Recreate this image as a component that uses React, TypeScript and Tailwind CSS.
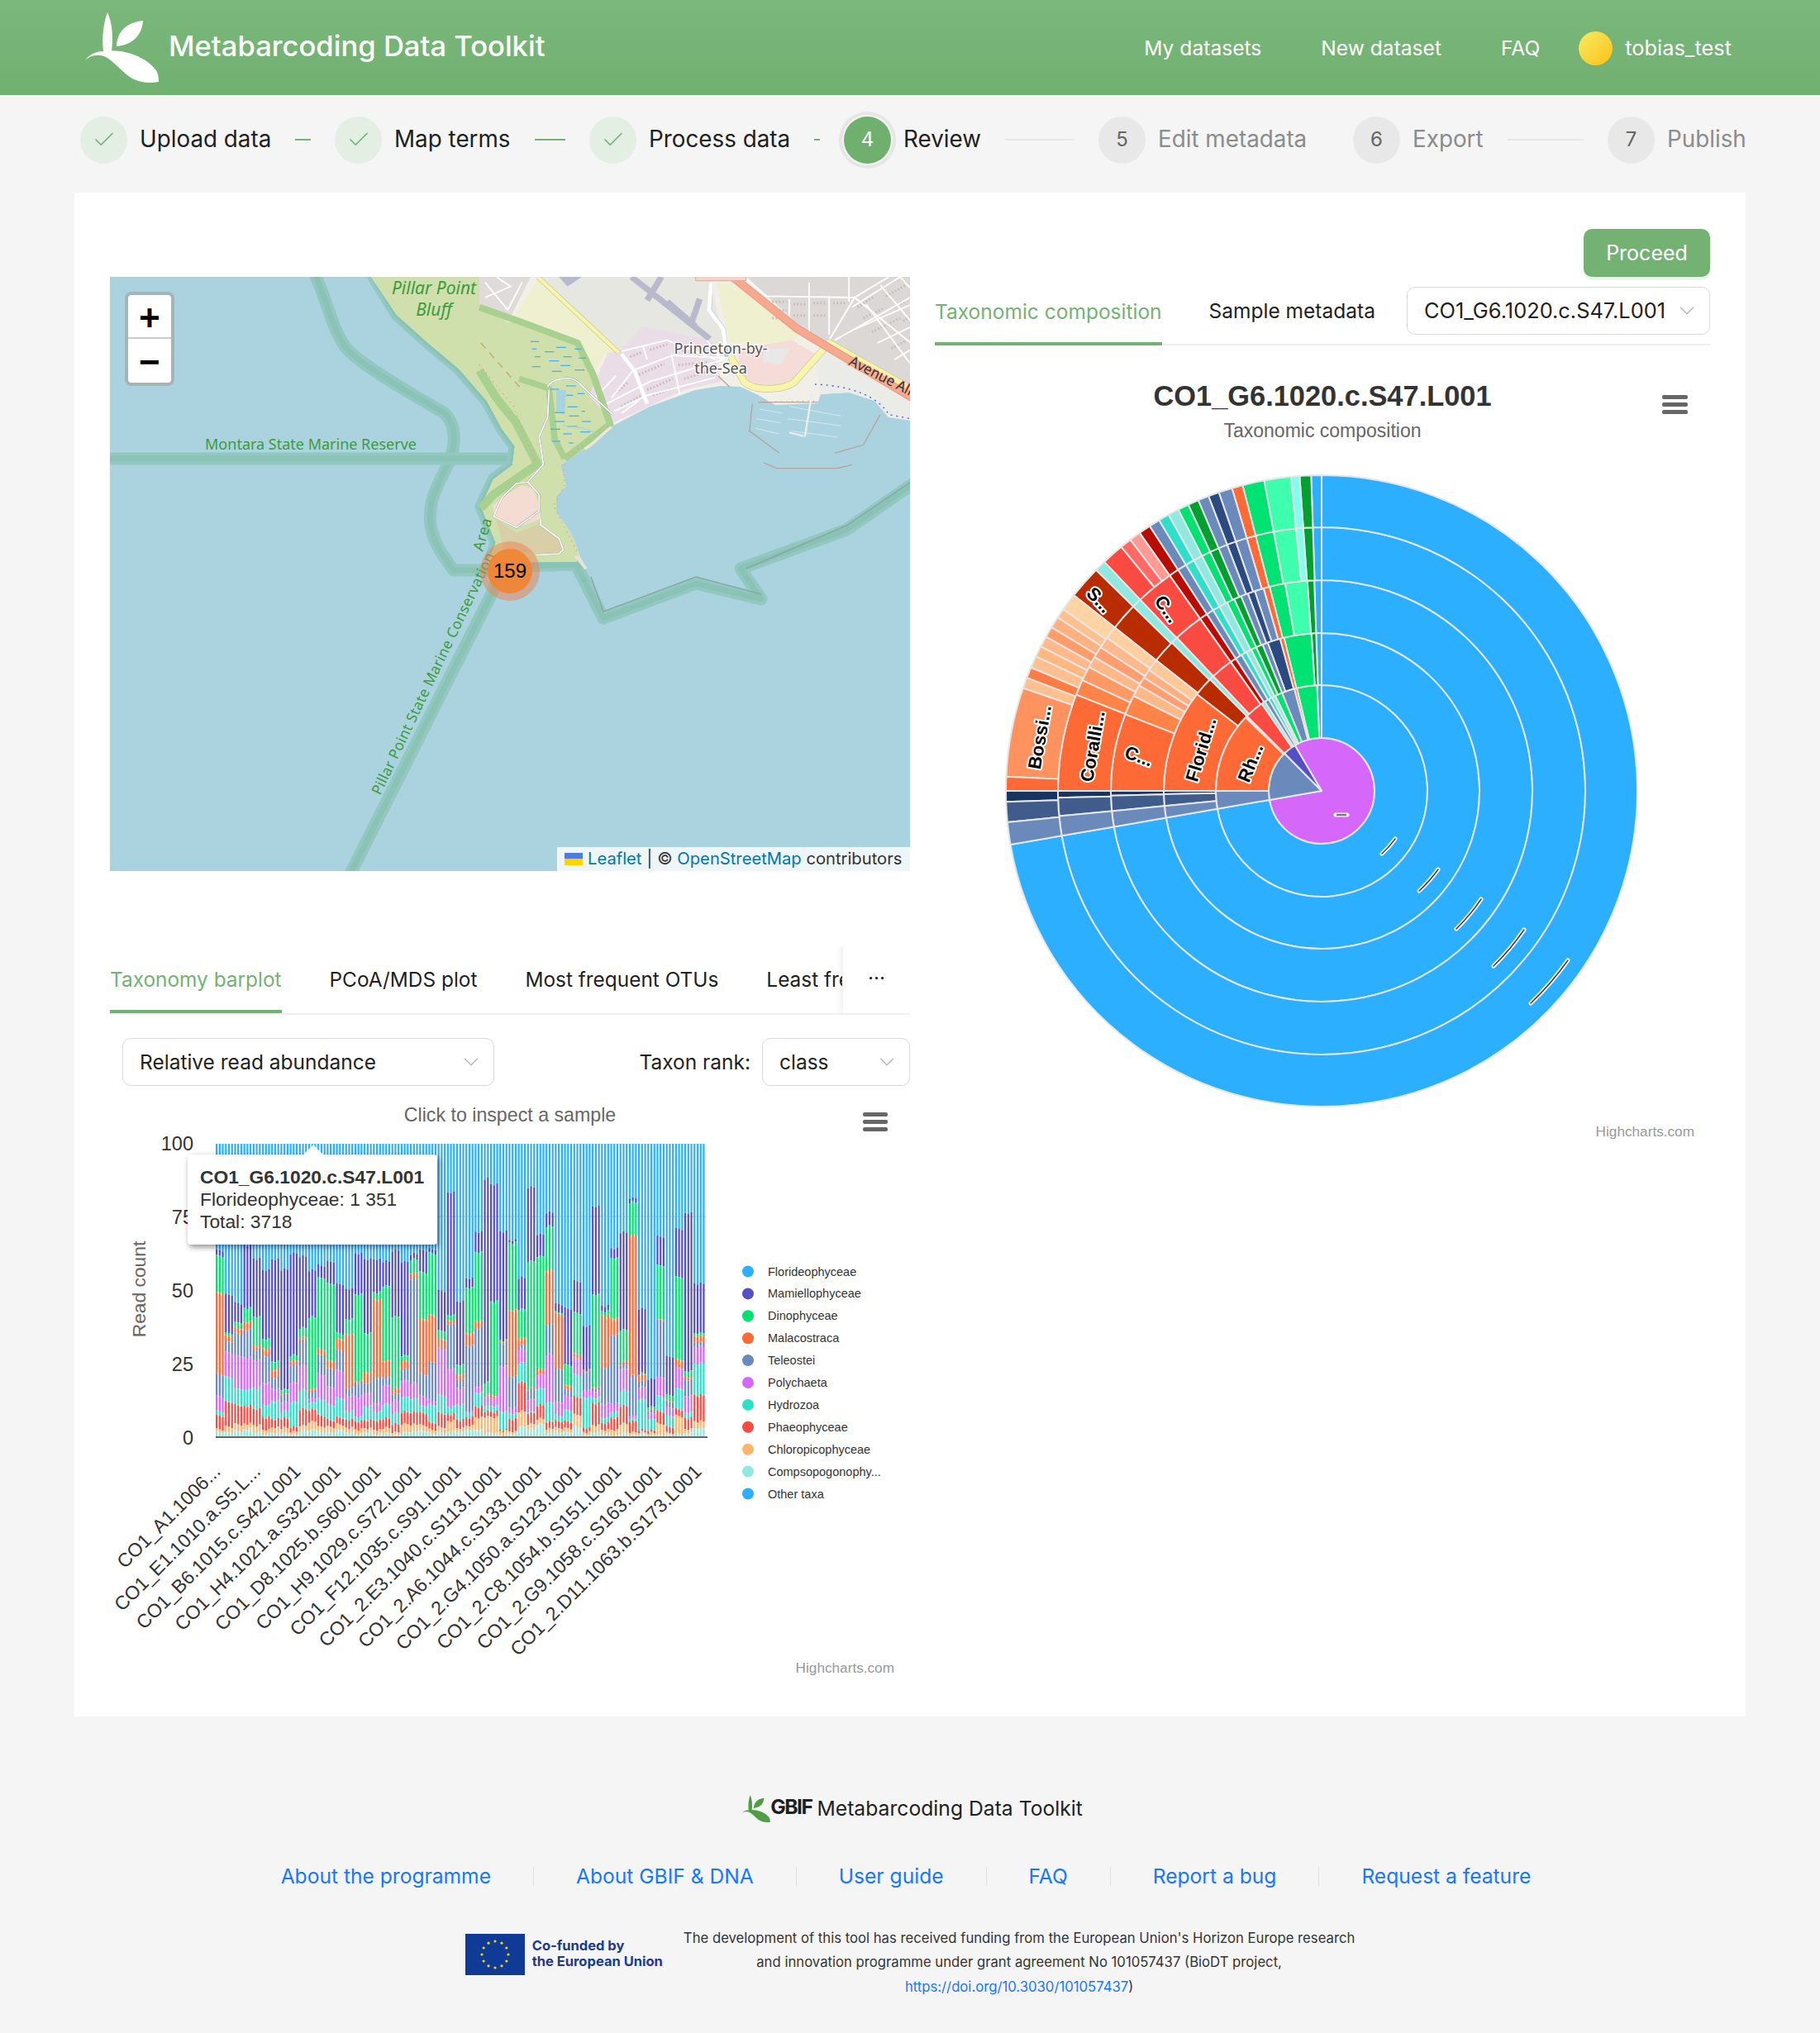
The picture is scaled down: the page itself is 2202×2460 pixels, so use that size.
import { Check, ChevronDown } from "lucide-react"

const GREEN = "#74b274"

const steps = [
  { label: "Upload data", state: "done" },
  { label: "Map terms", state: "done" },
  { label: "Process data", state: "done" },
  { label: "Review", state: "current" },
  { label: "Edit metadata", state: "wait" },
  { label: "Export", state: "wait" },
  { label: "Publish", state: "wait" },
]

const c = {
  blue: "#2caffe",
  indigo: "#544fc5",
  green: "#00e272",
  orange: "#fe6a35",
  gray: "#6b8abc",
  purple: "#d568fb",
  teal: "#2ee0ca",
  red: "#fa4b42",
  lo: "#feb56a",
  pale: "#91e8e1",
  dg: "#00a030",
  mint: "#3dffae",
  cyan: "#80ffef",
  navy: "#2a4a80",
  dred: "#b80c00",
  brown: "#b92c00",
  dnavy: "#17355f",
  mnavy: "#3f5c8c",
}

// [end angle, colour], angles counter-clockwise from the top
const upper3 = [[2, c.blue], [3.9, c.dg], [10, c.mint], [14.3, c.green], [16, c.orange], [18.5, c.gray], [20.5, c.navy], [22.5, c.gray], [24.5, c.dg], [26.7, c.green], [29, c.pale], [31, c.teal], [33, c.gray], [35.2, c.dred]] as const
const upper4 = [[1.9, c.blue], [4, c.dg], [5.6, c.cyan], [10.5, c.mint], [14.5, c.green], [16.5, c.orange], [19, c.gray], [21, c.navy], [23, c.gray], [25, c.dg], [27, c.green], [29, c.pale], [31, c.teal], [33, c.gray], [35.2, c.dred]] as const

const rings: { r0: number; r1: number; segs: readonly (readonly [number, string])[] }[] = [
  {
    r0: 64,
    r1: 128,
    segs: [[2.5, c.blue], [13.6, c.green], [15, c.orange], [22, c.gray], [26, c.green], [28, c.pale], [30, c.teal], [32.5, c.gray], [34.5, c.pale], [45, c.red], [46, c.pale], [90, c.orange], [99.8, c.gray]],
  },
  {
    r0: 128,
    r1: 191,
    segs: [[2, c.blue], [3.7, c.dg], [13.8, c.green], [15.3, c.orange], [20, c.navy], [22, c.gray], [24.5, c.dg], [26.5, c.green], [28.5, c.pale], [30.5, c.teal], [33, c.gray], [35.2, c.dred], [43.4, c.red], [45, c.pale], [52.2, c.brown], [90, c.orange], [91.2, c.dnavy], [95.5, c.mnavy], [99.8, c.gray]],
  },
  {
    r0: 191,
    r1: 255,
    segs: [...upper3, [43.4, c.red], [45.3, c.pale], [51.7, c.brown], [55, "#ffc898"], [57.5, "#ffb080"], [60, "#ff9e6e"], [63.2, "#ffb888"], [68.7, "#ff8448"], [90, c.orange], [91.3, c.dnavy], [95.5, c.mnavy], [99.8, c.gray]],
  },
  {
    r0: 255,
    r1: 319,
    segs: [...upper4, [43.5, c.red], [45.6, c.pale], [51.7, c.brown], [54.5, "#ffcf9f"], [57, "#ffb98a"], [59.5, "#ff9e6e"], [62, "#ffb888"], [65.2, "#ff9a66"], [68.6, "#ff8448"], [90, c.orange], [91.5, c.dnavy], [95.5, c.mnavy], [99.8, c.gray]],
  },
  {
    r0: 319,
    r1: 382,
    segs: [...upper4, [37.3, "#ff9a94"], [39.4, "#ff6a64"], [43.5, c.red], [45.6, c.pale], [51.7, c.brown], [54.9, "#ffd4a3"], [56.7, "#ffc090"], [58.8, "#ffb27f"], [60.8, "#ff9c6a"], [62.8, "#ffb98a"], [64.8, "#ffb880"], [67, "#ffc090"], [69, "#ff7c45"], [71, "#ffc090"], [87.4, "#ff9360"], [90, c.orange], [92, c.dnavy], [95.7, c.mnavy], [99.8, c.gray]],
  },
]

const CX = 391
const CY = 392

function pt(r: number, a: number) {
  const t = (a * Math.PI) / 180
  return `${(CX - r * Math.sin(t)).toFixed(2)} ${(CY - r * Math.cos(t)).toFixed(2)}`
}

function arc(r0: number, r1: number, a0: number, a1: number) {
  const large = a1 - a0 > 180 ? 1 : 0
  if (r0 === 0) return `M${CX} ${CY}L${pt(r1, a0)}A${r1} ${r1} 0 ${large} 0 ${pt(r1, a1)}Z`
  return `M${pt(r0, a0)}L${pt(r1, a0)}A${r1} ${r1} 0 ${large} 0 ${pt(r1, a1)}L${pt(r0, a1)}A${r0} ${r0} 0 ${large} 1 ${pt(r0, a0)}Z`
}

// small clipped data labels, full coordinates minus the svg origin
const marks = [
  [1672, 1033, 1688, 1015],
  [1717, 1078, 1740, 1052],
  [1762, 1124, 1792, 1088],
  [1807, 1169, 1844, 1125],
  [1852, 1214, 1897, 1162],
]

const sunLabels = [
  { t: "Bossi...", x: 1258, y: 892, r: -80 },
  { t: "Coralli...", x: 1322, y: 903, r: -80 },
  { t: "C...", x: 1378, y: 915, r: 20 },
  { t: "Florid...", x: 1453, y: 907, r: -73 },
  { t: "Rh...", x: 1513, y: 923, r: -68 },
  { t: "S...", x: 1330, y: 726, r: 47 },
  { t: "C...", x: 1412, y: 737, r: 55 },
]

function Sunburst() {
  const ox = 1208
  const oy = 565
  return (
    <svg width="784" height="784" className="mx-auto block font-['Liberation_Sans',sans-serif]">
      <g stroke="#e6e6e6" strokeWidth="2" strokeLinejoin="round">
        <path d={arc(0, 64, 99.8, 390.4)} fill={c.purple} />
        <path d={arc(0, 64, 44.6, 99.8)} fill={c.gray} />
        <path d={arc(0, 64, 30.4, 44.6)} fill={c.indigo} />
        {rings.map((ring) => {
          let prev = 0
          return (
            <g key={ring.r0}>
              <path d={arc(ring.r0, ring.r1, 99.8, 360)} fill={c.blue} />
              {ring.segs.map(([end, color]) => {
                const d = arc(ring.r0, ring.r1, prev, end)
                prev = end
                return <path key={end} d={d} fill={color} />
              })}
            </g>
          )
        })}
      </g>
      {sunLabels.map((l) => (
        <text
          key={l.t + l.x}
          x={l.x - ox}
          y={l.y - oy}
          transform={`rotate(${l.r} ${l.x - ox} ${l.y - oy})`}
          textAnchor="middle"
          dominantBaseline="central"
          fontSize="22"
          fontWeight="700"
          fill="#000"
          stroke="#fff"
          strokeWidth="4"
          strokeLinejoin="round"
          paintOrder="stroke"
        >
          {l.t}
        </text>
      ))}
      <line x1={1623 - 7 - ox} x2={1623 + 7 - ox} y1={986 - oy} y2={986 - oy} stroke="#fff" strokeWidth="5" strokeLinecap="round" />
      <line x1={1623 - 6 - ox} x2={1623 + 6 - ox} y1={986 - oy} y2={986 - oy} stroke="#777" strokeWidth="2.5" />
      {marks.map(([x1, y1, x2, y2]) => {
        const r = Math.hypot(x1 - 1599, y1 - 957)
        const d = `M${x1 - ox} ${y1 - oy}A${r} ${r} 0 0 0 ${x2 - ox} ${y2 - oy}`
        return (
          <g key={x1} fill="none" strokeLinecap="round">
            <path d={d} stroke="#fff" strokeWidth="5" />
            <path d={d} stroke="#333" strokeWidth="1.4" />
          </g>
        )
      })}
    </svg>
  )
}

// [bars, indigo, green, orange, gray, purple, teal, red, light orange, pale] tops, traced off the plot
const blocks = [
  [3, 400, 420, 555, 850, 930, 985, 1000, 1050, 1060],
  [3, 560, 700, 710, 730, 770, 860, 950, 1040, 1060],
  [3, 590, 660, 680, 700, 780, 900, 960, 1030, 1055],
  [3, 380, 610, 660, 690, 790, 905, 965, 1030, 1050],
  [3, 430, 640, 745, 760, 800, 900, 975, 1035, 1060],
  [3, 470, 720, 755, 780, 880, 960, 1005, 1050, 1065],
  [3, 430, 800, 830, 860, 900, 945, 1010, 1040, 1060],
  [3, 470, 905, 920, 925, 950, 985, 1010, 1045, 1065],
  [3, 410, 780, 800, 815, 880, 950, 1040, 1058, 1068],
  [3, 420, 680, 715, 725, 815, 905, 975, 1035, 1055],
  [3, 470, 640, 900, 910, 935, 950, 975, 1020, 1050],
  [3, 455, 500, 760, 780, 850, 940, 1000, 1040, 1060],
  [3, 440, 520, 800, 830, 895, 960, 1015, 1040, 1060],
  [3, 520, 700, 720, 760, 835, 935, 1005, 1030, 1050],
  [3, 540, 650, 705, 900, 925, 985, 1015, 1045, 1062],
  [3, 410, 560, 875, 880, 930, 1005, 1020, 1050, 1068],
  [3, 430, 700, 840, 880, 915, 965, 1015, 1045, 1060],
  [3, 430, 550, 575, 860, 950, 985, 1015, 1050, 1065],
  [3, 440, 530, 800, 860, 890, 960, 1010, 1045, 1065],
  [3, 400, 640, 900, 920, 945, 990, 1030, 1060, 1070],
  [3, 440, 780, 800, 830, 870, 930, 985, 1030, 1060],
  [3, 410, 430, 480, 500, 880, 935, 985, 1030, 1055],
  [3, 400, 480, 650, 850, 930, 965, 990, 1035, 1055],
  [3, 395, 410, 635, 805, 945, 960, 1025, 1050, 1065],
  [3, 545, 690, 720, 755, 755, 925, 990, 1040, 1060],
  [3, 190, 635, 655, 670, 830, 970, 995, 1020, 1060],
  [3, 585, 815, 850, 870, 900, 960, 1015, 1045, 1060],
  [3, 500, 535, 700, 745, 985, 990, 1005, 1035, 1050],
  [3, 330, 405, 655, 680, 890, 915, 965, 1005, 1050],
  [2, 140, 880, 925, 930, 930, 965, 985, 1005, 1065],
  [3, 160, 585, 925, 935, 935, 965, 985, 1005, 1065],
  [3, 330, 725, 730, 735, 820, 985, 1050, 1055, 1070],
  [3, 360, 370, 615, 855, 970, 990, 1010, 1055, 1065],
  [3, 500, 615, 720, 745, 760, 810, 880, 985, 1040],
  [3, 170, 440, 900, 905, 940, 985, 990, 1030, 1050],
  [3, 340, 420, 830, 850, 850, 900, 960, 1010, 1030],
  [3, 260, 310, 470, 665, 775, 950, 1020, 1045, 1060],
  [3, 595, 625, 630, 830, 950, 1000, 1020, 1045, 1060],
  [3, 610, 815, 890, 905, 930, 980, 1020, 1045, 1060],
  [3, 510, 625, 775, 790, 790, 850, 930, 995, 1040],
  [3, 675, 835, 835, 840, 910, 935, 1045, 1060, 1070],
  [3, 240, 560, 895, 900, 910, 935, 955, 1035, 1060],
  [3, 600, 620, 635, 825, 955, 1005, 1025, 1050, 1065],
  [3, 390, 425, 645, 705, 955, 985, 1005, 1050, 1070],
  [3, 335, 690, 805, 815, 830, 910, 965, 1030, 1065],
  [3, 210, 225, 345, 855, 1000, 1010, 1020, 1060, 1070],
  [3, 610, 845, 850, 875, 895, 940, 1050, 1058, 1065],
  [3, 865, 965, 975, 980, 990, 1010, 1050, 1060, 1070],
  [3, 350, 455, 650, 655, 860, 930, 985, 1030, 1070],
  [3, 785, 925, 945, 950, 970, 1000, 1040, 1062, 1070],
  [3, 320, 495, 795, 825, 825, 900, 975, 1000, 1065],
  [3, 265, 840, 860, 870, 930, 990, 1010, 1050, 1065],
  [4, 520, 700, 710, 735, 750, 810, 925, 1020, 1045],
]

const stack = [c.blue, c.indigo, c.green, c.orange, c.gray, c.purple, c.teal, c.red, c.lo, c.pale]

const legend = [
  ["Florideophyceae", c.blue],
  ["Mamiellophyceae", c.indigo],
  ["Dinophyceae", c.green],
  ["Malacostraca", c.orange],
  ["Teleostei", c.gray],
  ["Polychaeta", c.purple],
  ["Hydrozoa", c.teal],
  ["Phaeophyceae", c.red],
  ["Chloropicophyceae", c.lo],
  ["Compsopogonophy...", c.pale],
  ["Other taxa", c.blue],
]

const xLabels = [
  "CO1_A1.1006...",
  "CO1_E1.1010.a.S5.L...",
  "CO1_B6.1015.c.S42.L001",
  "CO1_H4.1021.a.S32.L001",
  "CO1_D8.1025.b.S60.L001",
  "CO1_H9.1029.c.S72.L001",
  "CO1_F12.1035.c.S91.L001",
  "CO1_2.E3.1040.c.S113.L001",
  "CO1_2.A6.1044.c.S133.L001",
  "CO1_2.G4.1050.a.S123.L001",
  "CO1_2.C8.1054.b.S151.L001",
  "CO1_2.G9.1058.c.S163.L001",
  "CO1_2.D11.1063.b.S173.L001",
]

function BarChart() {
  const bars: { x: number; y: number; h: number; color: string }[] = []
  let i = 0
  blocks.forEach((b) => {
    for (let n = 0; n < b[0]; n++) {
      const jitter = ((i * 37) % 11) - 5
      const tops = [12, ...b.slice(1).map((v) => Math.min(1075, v + jitter)), 1075]
      tops.slice(0, -1).forEach((t, k) => {
        const next = tops[k + 1]
        if (next > t) bars.push({ x: 128 + i * 3.73, y: 50 + t / 3, h: (next - t) / 3, color: stack[k] })
      })
      i++
    }
  })
  return (
    <div className="relative h-[703px] w-[968px] font-['Liberation_Sans',sans-serif]">
      <svg width="968" height="703" className="block">
        <text x="484" y="27" textAnchor="middle" fontSize="23.2" fill="#666">
          Click to inspect a sample
        </text>
        <g fill="#666">
          <rect x="911" y="16" width="30" height="5" rx="2" />
          <rect x="911" y="25" width="30" height="5" rx="2" />
          <rect x="911" y="34" width="30" height="5" rx="2" />
        </g>
        {[142, 231, 320].map((y) => (
          <line key={y} x1="128" x2="721" y1={y} y2={y} stroke="#e6e6e6" strokeWidth="2" />
        ))}
        {bars.map((b, k) => (
          <rect key={k} x={b.x} y={b.y} width="2.2" height={b.h} fill={b.color} />
        ))}
        <line x1="128" x2="723" y1="409" y2="409" stroke="#666" strokeWidth="2" />
        <g fontSize="23.5" fill="#333" textAnchor="end">
          {[["100", 53], ["75", 142], ["50", 231], ["25", 320], ["0", 409]].map(([t, y]) => (
            <text key={t} x="101" y={Number(y) + 9}>
              {t}
            </text>
          ))}
        </g>
        <text transform="translate(43 230) rotate(-90)" textAnchor="middle" fontSize="22.8" fill="#666">
          Read count
        </text>
        <g fontSize="23.1" fill="#333" textAnchor="end">
          {xLabels.map((t, k) => (
            <text key={t} transform={`translate(${135 + k * 48.5} 452) rotate(-45)`}>
              {t}
            </text>
          ))}
        </g>
        {legend.map(([t, color], k) => (
          <g key={t}>
            <circle cx="772" cy={208.5 + k * 26.9} r="7" fill={color} />
            <text x="796" y={213.5 + k * 26.9} fontSize="14.5" fill="#333">
              {t}
            </text>
          </g>
        ))}
        <text x="949" y="694" textAnchor="end" fontSize="17.2" fill="#999">
          Highcharts.com
        </text>
      </svg>
      <div className="absolute left-[94px] top-[67px] h-[109px] w-[302px] rounded-[4px] bg-white pl-[15px] pt-[14px] text-[22.8px] leading-[27px] text-[#333] shadow-[2px_3px_7px_rgba(0,0,0,0.45)]">
        <div className="absolute left-[143px] top-[-8px] size-[18px] rotate-45 bg-white" />
        <div className="relative font-bold">CO1_G6.1020.c.S47.L001</div>
        <div>Florideophyceae: 1 351</div>
        <div>Total: 3718</div>
      </div>
    </div>
  )
}

const pts = (a: number[][]) => a.map((p) => p.join(",")).join(" ")

const seaBands = [
  "M247 -5C262 25 268 62 285 85C300 105 370 145 405 165C420 180 418 205 410 225C395 255 385 270 388 300C392 325 405 340 416 355L470 355",
  "M0 220L490 220",
  "M291 722L463 381L470 360",
  "M500 350L564 348L597 413L709 371L788 390L763 353L891 306L972 250",
  "M316 -5L347 46L385 80L422 111L456 150L475 185L490 205L487 228L464 245L449 278L467 322L460 345",
]

const landOutline = [[316, 0], [347, 46], [385, 80], [422, 111], [456, 150], [475, 185], [490, 205], [487, 228], [464, 245], [449, 278], [467, 322], [457, 345], [564, 345], [569, 338], [558, 310], [540, 285], [540, 265], [552, 253], [545, 228], [574, 208], [609, 180], [653, 157], [708, 137], [739, 132], [763, 133], [784, 143], [805, 155], [856, 153], [860, 142], [894, 140], [925, 150], [942, 170], [977, 175], [977, 0]]

const parkOutline = [[316, 0], [347, 46], [385, 80], [422, 111], [456, 150], [475, 185], [490, 205], [487, 228], [464, 245], [449, 278], [467, 322], [457, 345], [564, 345], [569, 338], [558, 310], [540, 285], [540, 265], [552, 253], [545, 228], [574, 208], [607, 178], [586, 118], [566, 78], [499, 52], [481, 55], [447, 33], [450, 0]]

const marsh = [[180, 235, 210], [185, 262, 200], [230, 272, 262], [270, 256, 305], [335, 262, 360], [195, 290, 215], [295, 290, 325], [350, 295, 375], [245, 305, 280], [285, 322, 320], [185, 326, 215], [335, 338, 370], [255, 343, 290], [250, 408, 280], [305, 396, 340], [345, 424, 370], [305, 430, 330], [310, 472, 345], [265, 493, 300], [360, 488, 372], [315, 505, 350], [265, 525, 300], [360, 525, 392], [310, 543, 345], [250, 553, 285], [295, 570, 325], [255, 597, 285], [315, 603, 332], [355, 563, 390]]

const townStreets = [
  "M500 270L660 230L830 300", "M465 440L540 340L680 285L880 295", "M410 435L480 360", "M430 470L600 380L860 300", "M470 490L590 430L830 365", "M575 250L590 300", "M675 280L705 425", "M800 230L850 300", "M500 495L560 450",
]

const gridStreets = [
  "M940 10L1010 70L1320 75L1541 260", "M1160 20L1160 200", "M1090 80L1090 170", "M1230 70L1230 210", "M1300 0L1300 90", "M1230 230L1320 75L1440 0", "M1250 230L1541 60", "M1320 190L1541 90", "M1400 240L1541 170", "M1460 300L1541 250", "M1360 100L1541 350", "M1410 30L1541 190", "M1480 0L1541 70", "M1310 110L1480 0",
]

const buildings = [
  "M1030 90L1080 92M1030 120L1080 122M1030 150L1080 150M1105 100L1150 100M1105 140L1150 140M1175 95L1220 95M1175 140L1220 140M1245 95L1290 95",
  "M1330 110L1390 70M1350 150L1420 115M1380 200L1480 150M1430 70L1500 30M1460 110L1530 70M1490 160L1535 135M1450 260L1530 215",
  "M530 290L570 275M600 265L660 245M690 260L780 285M550 360L650 315M700 320L800 310M590 410L680 370M720 370L800 345M480 420L520 385M500 470L570 430M610 430L690 400",
]

function MapArt() {
  return (
    <svg viewBox="0 0 968 719" width="968" height="719" className="block font-['Noto_Sans',sans-serif]">
      <rect width="968" height="719" fill="#aad3df" />
      {seaBands.map((d) => (
        <g key={d} fill="none" strokeLinejoin="round">
          <path d={d} stroke="#92c8c0" strokeWidth="15" />
          <path d={d} stroke="#8ac3b6" strokeWidth="7" />
        </g>
      ))}
      <polyline points="582,363 597,405 709,363 788,384" fill="none" stroke="#8aa8a4" strokeWidth="1.5" />
      <polyline points="770,353 891,301 972,246" fill="none" stroke="#8aa8a4" strokeWidth="1.5" />
      <polygon points={pts(landOutline)} fill="#f2efe9" />
      <polygon points={pts(parkOutline)} fill="#cfe0ad" />
      <g transform="translate(447 0) scale(0.344 0.3333)">
        {/* fields, airfield and town blocks */}
        <polygon points="125,140 210,0 490,280 440,285 400,350 345,235 150,155" fill="#eef0d0" />
        <polygon points="200,0 810,0 860,240 500,270" fill="#e7e7e1" />
        <polygon points="835,20 880,240 1100,240 1130,200 960,40" fill="#eef0d0" />
        <polygon points="575,180 820,230 850,380 720,410 470,530 385,430 450,280 500,260" fill="#eadde8" />
        <polygon points="905,260 1100,230 1180,280 1130,370 1000,410 920,370" fill="#f5dcd8" />
        <polygon points="1000,260 1090,260 1060,320 1000,310" fill="#e8e8e6" />
        <polygon points="940,0 1541,0 1541,420 1150,200" fill="#dcd8d5" />
        <polygon points="1180,300 1240,260 1541,440 1541,520 1430,500 1390,440 1300,420 1200,425" fill="#ebebe7" />
        <polygon points="0,0 180,0 100,165 0,100" fill="#dedbd8" />
        <polygon points="280,0 360,0 310,35" fill="#b9b9ce" />
        <g fill="none" stroke="#b9b9ce" strokeWidth="22">
          <path d="M535 0L810 225" />
          <path d="M640 0L590 85" />
          <path d="M660 90L760 180" />
          <path d="M775 80L745 170" />
        </g>
        {buildings.map((d) => (
          <path key={d} d={d} fill="none" stroke="#c9bcb6" strokeWidth="9" strokeDasharray="5 7" />
        ))}
        <g fill="none" stroke="#fff" strokeWidth="5.5">
          {gridStreets.map((d) => (
            <path key={d} d={d} />
          ))}
          {townStreets.map((d) => (
            <path key={d} d={d} />
          ))}
          <path d="M20 20L100 120L150 20M20 75L110 35L60 0" />
        </g>
        <path d="M500 280L545 340L590 460" fill="none" stroke="#fff" strokeWidth="13" />
        <path d="M815 20L810 120L860 190L870 290" fill="none" stroke="#9fd0dc" strokeWidth="14" />
        <path d="M815 20L808 120L858 190L866 250" fill="none" stroke="#fff" strokeWidth="14" />
        <g fill="none" strokeLinejoin="round">
          <path d="M205 0L490 275" stroke="#c9c98f" strokeWidth="17" />
          <path d="M205 0L490 275" stroke="#f7f4ab" strokeWidth="13" />
          <path d="M885 290L930 380C970 420 1080 410 1110 380L1230 240L1540 420" stroke="#c9c98f" strokeWidth="26" />
          <path d="M885 290L930 380C970 420 1080 410 1110 380L1230 240L1540 420" stroke="#f7f4ab" strokeWidth="22" />
          <path d="M890 0L1120 190L1541 450" stroke="#e5957c" strokeWidth="30" />
          <path d="M890 0L1120 190L1541 450" stroke="#f6a98e" strokeWidth="25" />
        </g>
        <rect x="760" y="-10" width="178" height="24" rx="6" fill="#f6d3c4" stroke="#e5a890" strokeWidth="3" />
        <path d="M1180 390C1300 395 1400 430 1440 500L1541 520" fill="none" stroke="#4060ee" strokeWidth="4" strokeDasharray="6 14" />
        <path d="M980 455L1190 455M880 400L840 360M960 460L950 560L1055 640M1250 640L1350 610L1410 500M1000 675L1045 695L1260 695L1310 682" fill="none" stroke="#b5a5a0" strokeWidth="4" />
        <g fill="none" stroke="#d5e7ee" strokeWidth="3">
          <path d="M985 480L1065 495M975 515L1060 530M970 550L1055 570M1090 470L1270 505M1085 515L1270 540M1100 560L1260 582" />
        </g>
        <path d="M1170 420L1145 580M1090 565L1140 578" fill="none" stroke="#ececec" strokeWidth="7" />
        {/* park edges, marsh and trails */}
        <g fill="none" stroke="#a8d190" strokeLinejoin="round">
          <path d="M0 110L150 165L345 240L400 355L460 535L300 660" strokeWidth="24" />
          <path d="M140 370L245 405L265 590L300 660" strokeWidth="22" />
          <path d="M0 340L60 440L130 530L205 680L50 790L5 840" strokeWidth="30" />
        </g>
        <polygon points="270,410 305,410 300,500 270,490" fill="#a8d3e0" />
        {marsh.map(([x1, y, x2]) => (
          <line key={`${x1}-${y}`} x1={x1} x2={x2} y1={y} y2={y} stroke="#4fb0ef" strokeWidth="4" />
        ))}
        <path d="M295 540C340 545 380 550 420 570" fill="none" stroke="#9fd0dc" strokeWidth="3" />
        <polygon points="150,755 190,770 210,830 215,880 130,910 60,880 45,830 100,790" fill="#f5dcd3" />
        <polygon points="60,880 130,930 215,895 290,960 295,1000 220,1010 85,985" fill="#d8cfa8" />
        <path d="M5 240L150 410" fill="none" stroke="#c8a868" strokeWidth="4" strokeDasharray="26 20" />
        <path d="M0 320L120 470L200 680M295 680L300 760L260 830L345 1000M300 660L465 535M985 455L1180 450" fill="none" stroke="#ee8f80" strokeWidth="4" strokeDasharray="3 16" />
        <g fill="none" stroke="#9a9a9a" strokeWidth="7">
          <path d="M240 400C250 370 320 355 350 385L395 430L470 500" />
          <path d="M245 410L240 510L210 580L225 680L170 745L130 750L80 800L50 870L130 910L210 850L210 790L170 745M215 880L215 900L280 950L295 990L280 1005L200 1010" />
        </g>
        <g fill="none" stroke="#fff" strokeWidth="5">
          <path d="M240 400C250 370 320 355 350 385L395 430L470 500" />
          <path d="M245 410L240 510L210 580L225 680L170 745L130 750L80 800L50 870L130 910L210 850L210 790L170 745M215 880L215 900L280 950L295 990L280 1005L200 1010" />
        </g>
        <path d="M340 1015L375 1060L350 1020Z" fill="#e8e4d4" stroke="#e8e4d4" strokeWidth="10" />
        <path d="M465 545C430 570 400 610 370 625" fill="none" stroke="#ede7d3" strokeWidth="10" />
      </g>
      <text x="392" y="21" textAnchor="middle" fontSize="21" fontStyle="italic" fill="#3d9b3d">
        Pillar Point
      </text>
      <text x="392" y="47" textAnchor="middle" fontSize="21" fontStyle="italic" fill="#3d9b3d">
        Bluff
      </text>
      <text x="243" y="209" textAnchor="middle" fontSize="18" fill="#3d9b3d">
        Montara State Marine Reserve
      </text>
      <g textAnchor="middle" fontSize="18" fill="#555" stroke="#fff" strokeOpacity="0.7" strokeWidth="3" paintOrder="stroke">
        <text x="739" y="93">
          Princeton-by-
        </text>
        <text x="739" y="117">
          the-Sea
        </text>
      </g>
      <text transform="translate(893 106) rotate(27)" fontSize="17" fill="#333" stroke="#f6a98e" strokeWidth="2" paintOrder="stroke">
        Avenue Alhambra
      </text>
      <text transform="translate(327 628) rotate(-64.5)" fontSize="17.5" fill="#3d9b3d" letterSpacing="0.3">
        Pillar Point State Marine Conservation
      </text>
      <text transform="translate(451 333) rotate(-74)" fontSize="18" fill="#3d9b3d" letterSpacing="0.6">
        Area
      </text>
    </svg>
  )
}

function MapPanel() {
  return (
    <div className="relative h-[719px] w-[968px] overflow-hidden">
      <MapArt />
      <div className="absolute left-[18px] top-[18px] w-[60px] rounded-[8px] border-4 border-[#a4b5b8] bg-white font-['Liberation_Mono',monospace] text-[44px] font-bold text-black">
        <div className="h-[53px] border-b-2 border-[#ccc] text-center leading-[62px]">+</div>
        <div className="h-[53px] text-center leading-[62px]">−</div>
      </div>
      <div className="absolute left-[448px] top-[320px] flex size-[72px] items-center justify-center rounded-full bg-[rgba(236,130,80,0.5)]">
        <div className="flex size-[54px] items-center justify-center rounded-full bg-[rgba(241,132,50,0.92)] font-['Liberation_Sans',sans-serif] text-[24px] text-black">
          159
        </div>
      </div>
      <div className="absolute bottom-0 right-0 flex h-[29px] w-[427px] items-center bg-white/80 pl-[9px] text-[20.2px] leading-none text-[#333]">
        <svg width="22" height="15" className="mr-[6px] shrink-0">
          <rect width="22" height="7.5" fill="#4c7be1" />
          <rect y="7.5" width="22" height="7.5" fill="#ffd500" />
        </svg>
        <span className="text-[#0078a8]">Leaflet</span>
        <span className="mx-[6px]">|</span>
        <span>©&nbsp;</span>
        <span className="text-[#0078a8]">OpenStreetMap</span>
        <span>&nbsp;contributors</span>
      </div>
    </div>
  )
}

function Select({ label, className }: { label: string; className: string }) {
  return (
    <div className={`flex h-[58px] items-center justify-between rounded-[10px] border border-[#d9d9d9] bg-white pl-[20px] pr-[12px] text-[#1f1f1f] ${className}`}>
      <span className="whitespace-nowrap">{label}</span>
      <ChevronDown size={30} strokeWidth={1} color="#b5b5b5" className="shrink-0" />
    </div>
  )
}

function Step({ label, state, n }: { label: string; state: string; n: number }) {
  const last = n === 7
  return (
    <div className={`flex items-center ${last ? "" : "w-[308px] shrink-0"}`}>
      {state === "done" && (
        <div className="flex size-[57px] shrink-0 items-center justify-center rounded-full bg-[#e3efe3]">
          <Check size={30} strokeWidth={1.4} color={GREEN} />
        </div>
      )}
      {state === "current" && (
        <div className="flex size-[57px] shrink-0 items-center justify-center rounded-full bg-[#6fb06f] text-[24px] text-white shadow-[0_0_0_2px_#f5f5f5,0_0_0_6px_#e6e6e6]">
          {n}
        </div>
      )}
      {state === "wait" && (
        <div className="flex size-[57px] shrink-0 items-center justify-center rounded-full bg-[#e8e8e8] text-[24px] text-[#666]">{n}</div>
      )}
      <span className={`ml-[15px] whitespace-nowrap text-[27.8px] ${state === "wait" ? "text-[#8c8c8c]" : "text-[#1f1f1f]"}`}>{label}</span>
      {!last && <div className={`ml-[29px] mr-[29px] h-[2px] flex-1 ${state === "wait" || state === "current" ? "bg-[#e8e8e8]" : "bg-[#74b274]"}`} />}
    </div>
  )
}

function Burger() {
  return (
    <div className="flex w-[31px] flex-col gap-[4px]">
      <div className="h-[5px] rounded-[2px] bg-[#666]" />
      <div className="h-[5px] rounded-[2px] bg-[#666]" />
      <div className="h-[5px] rounded-[2px] bg-[#666]" />
    </div>
  )
}

const footerLinks = ["About the programme", "About GBIF & DNA", "User guide", "FAQ", "Report a bug", "Request a feature"]

const euStars = Array.from({ length: 12 }, (_, k) => {
  const t = (k * Math.PI) / 6
  return [36 + 16 * Math.sin(t), 25 - 16 * Math.cos(t)]
})

export default function App() {
  return (
    <div className="min-h-[2460px] w-[2202px] bg-[#f5f5f5] font-['Inter',sans-serif]">
      {/* Header */}
      <header className="flex h-[115px] items-center bg-gradient-to-b from-[#7ab87b] to-[#70b070] pl-[100px] pr-[107px] text-white">
        <svg viewBox="100 10 95 95" width="95" height="95" className="mb-[-6px] mt-[-6px]" fill="#fff">
          <path d="M130 15C136 28 137 46 135 62L125 62C123 46 125 28 130 15Z" />
          <path d="M173 25C172 40 163 54 141 56C141 40 152 27 173 25Z" />
          <path d="M103 73C108 66 116 62 125 62C150 58 180 70 190 87C192 92 192 96 192 99C180 101 170 100 160 95C148 88 140 76 128 69C119 65 110 66 103 73Z" />
        </svg>
        <span className="mb-[4px] ml-[9px] text-[34.6px] font-medium">Metabarcoding Data Toolkit</span>
        <nav className="ml-auto flex items-center pt-[2px] text-[24.6px]">
          <span>My datasets</span>
          <span className="ml-[72px]">New dataset</span>
          <span className="ml-[72px]">FAQ</span>
          <div className="ml-[47px] size-[41px] rounded-full bg-gradient-to-tl from-[#ffc000] to-[#f1ec5e]" />
          <span className="ml-[15px] text-[25.4px]">tobias_test</span>
        </nav>
      </header>

      {/* Steps */}
      <div className="mb-[10px] flex h-[108px] items-center pl-[97px]">
        {steps.map((s, k) => (
          <Step key={s.label} label={s.label} state={s.state} n={k + 1} />
        ))}
      </div>

      {/* Card */}
      <main className="mx-[90px] grid h-[1844px] w-[2022px] grid-cols-[968px_938px] gap-x-[30px] bg-white px-[43px] pt-[44px]">
        <section className="pt-[58px]">
          <MapPanel />
          <div className="relative mt-[91px] flex h-[83px] items-center gap-[58px] overflow-hidden border-b-2 border-[#f0f0f0] text-[24.4px] text-[#1f1f1f]">
            <div className="relative flex h-full shrink-0 items-center whitespace-nowrap text-[#74b274]">
              Taxonomy barplot
              <div className="absolute bottom-0 left-0 right-0 h-[4px] bg-[#74b274]" />
            </div>
            <span className="shrink-0 whitespace-nowrap">PCoA/MDS plot</span>
            <span className="shrink-0 whitespace-nowrap">Most frequent OTUs</span>
            <span className="w-[92px] shrink-0 overflow-hidden whitespace-nowrap">Least frequent OTUs</span>
            <div className="absolute bottom-0 right-0 top-0 flex w-[81px] items-center justify-center bg-white pb-[4px] shadow-[-4px_0_6px_rgba(0,0,0,0.06)]">···</div>
          </div>
          <div className="mt-[28px] flex items-center pl-[15px] text-[24.5px] text-[#1f1f1f]">
            <Select label="Relative read abundance" className="w-[450px]" />
            <span className="ml-auto mr-[14px]">Taxon rank:</span>
            <Select label="class" className="w-[179px]" />
          </div>
          <div className="mt-[16px]">
            <BarChart />
          </div>
        </section>

        <section>
          <div className="flex justify-end">
            <button className="h-[58px] w-[153px] rounded-[10px] bg-[#74b274] pt-[2px] text-[25px] text-white shadow-[0_4px_0_rgba(116,178,116,0.15)]">Proceed</button>
          </div>
          <div className="mt-[12px] flex h-[71px] border-b-2 border-[#f0f0f0] text-[24.5px] text-[#1f1f1f]">
            <div className="relative flex h-[71px] items-center whitespace-nowrap pb-[11px] text-[#74b274]">
              Taxonomic composition
              <div className="absolute bottom-0 left-0 right-0 h-[4px] bg-[#74b274]" />
            </div>
            <div className="ml-[57px] flex items-center whitespace-nowrap pb-[11px]">Sample metadata</div>
            <Select label="CO1_G6.1020.c.S47.L001" className="ml-auto w-[367px] text-[25.4px]" />
          </div>
          <div className="relative font-['Liberation_Sans',sans-serif]">
            <div className="mt-[40px] text-center text-[34.4px] font-bold leading-[42px] text-[#333]">CO1_G6.1020.c.S47.L001</div>
            <div className="mt-[6px] text-center text-[23px] leading-[30px] text-[#666]">Taxonomic composition</div>
            <div className="absolute right-[27px] top-[20px]">
              <Burger />
            </div>
            <div className="mt-[29px]">
              <Sunburst />
            </div>
            <div className="mt-[8px] pr-[19px] text-right text-[17.2px] leading-[24px] text-[#999]">Highcharts.com</div>
          </div>
        </section>
      </main>

      {/* Footer */}
      <footer className="text-center">
        <div className="mt-[91px] flex items-center justify-center pl-[4px] text-[24.7px] text-[#1f1f1f]">
          <svg viewBox="100 10 95 95" width="37" height="37" fill="#4f9e45">
            <path d="M130 15C136 28 137 46 135 62L125 62C123 46 125 28 130 15Z" />
            <path d="M173 25C172 40 163 54 141 56C141 40 152 27 173 25Z" />
            <path d="M103 73C108 66 116 62 125 62C150 58 180 70 190 87C192 92 192 96 192 99C180 101 170 100 160 95C148 88 140 76 128 69C119 65 110 66 103 73Z" />
          </svg>
          <span className="mb-[4px] ml-[-1px] font-bold tracking-[-1.5px]">GBIF</span>
          <span className="ml-[6px]">Metabarcoding Data Toolkit</span>
        </div>
        <div className="mt-[43px] flex items-center justify-center pr-[10px] text-[24.6px] text-[#1677ff]">
          {footerLinks.map((l, k) => (
            <div key={l} className="flex items-center">
              {k > 0 && <div className="mx-[51px] h-[23px] w-px bg-[#e0e0e0]" />}
              <span>{l}</span>
            </div>
          ))}
        </div>
        <div className="mt-[42px] flex items-start justify-center">
          <svg width="72" height="50" className="mt-[9px] shrink-0">
            <rect width="72" height="50" fill="#0f3a96" />
            {euStars.map(([x, y]) => (
              <circle key={`${x}${y}`} cx={x} cy={y} r="1.6" fill="#f5d60a" />
            ))}
          </svg>
          <div className="ml-[9px] mt-[14px] text-left text-[16.5px] font-bold leading-[19px] text-[#1d3a8f]">
            Co-funded by
            <br />
            the European Union
          </div>
          <div className="ml-[25px] text-[16.7px] leading-[29.5px] text-[#333]">
            The development of this tool has received funding from the European Union's Horizon Europe research
            <br />
            and innovation programme under grant agreement No 101057437 (BioDT project,
            <br />
            <span className="text-[#1677ff]">https://doi.org/10.3030/101057437</span>)
          </div>
        </div>
      </footer>
    </div>
  )
}
